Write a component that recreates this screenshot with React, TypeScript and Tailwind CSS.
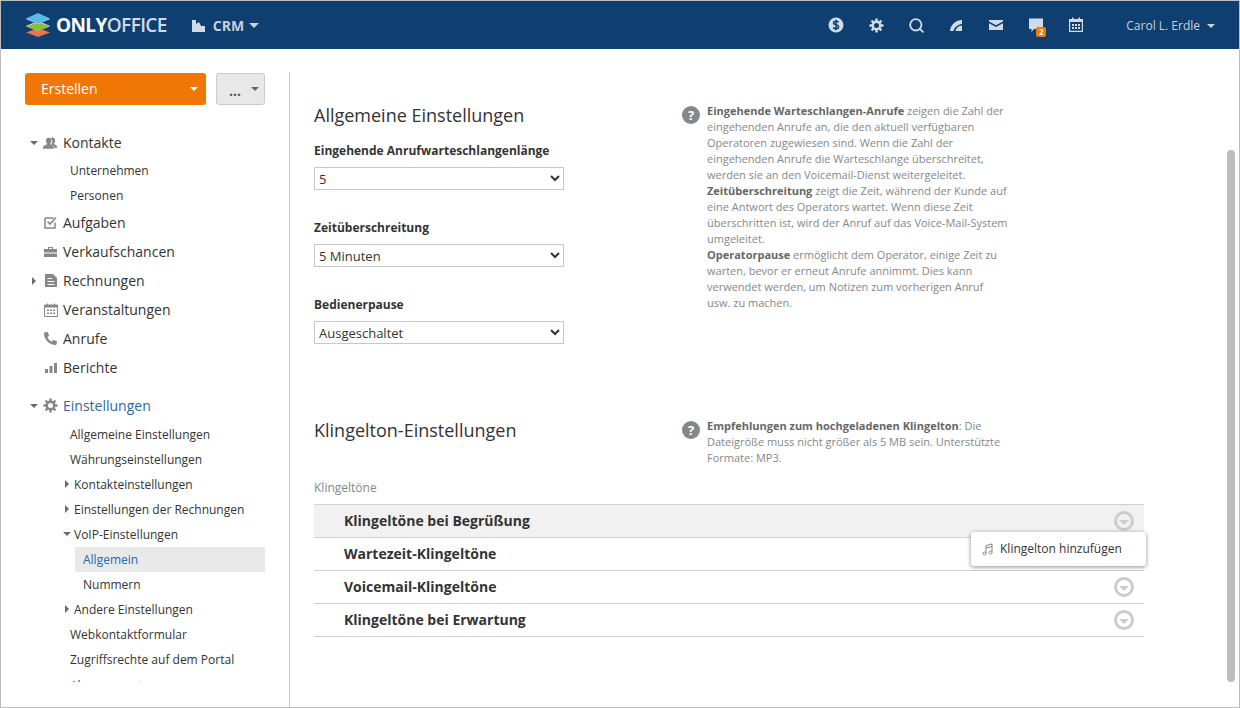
import { FaPhoneAlt } from "react-icons/fa";
import { Search } from "lucide-react";

const font = { fontFamily: '"Open Sans", sans-serif' };

const Caret = ({ className }: { className: string }) => <span className={`inline-block h-0 w-0 border-x-[4px] border-t-[4px] border-x-transparent ${className}`} />;
const CaretRight = () => <span className="inline-block h-0 w-0 border-y-[4px] border-l-[4px] border-y-transparent border-l-[#6a6a6a]" />;

const Logo = () => (
  <svg width="26" height="24" viewBox="0 0 26 24">
    <path d="M13 15l12 4.500L13 24 1 19.500z" fill="#e8734f" />
    <path d="M13 8l12 5-12 5-12-5z" fill="#fff" />
    <path d="M13 8.800l12 4.600-12 4.800-12-4.800z" fill="#8fbc3c" />
    <path d="M13 1l12 5-12 5L1 6z" fill="#fff" />
    <path d="M13 0l12 5.500-12 5.500L1 5.500z" fill="#5cb8e6" />
  </svg>
);

const Gear = ({ size, className }: { size: number; className?: string }) => (
  <svg className={className} width={size} height={size} viewBox="0 0 16 16" fill="none" stroke="currentColor">
    <circle cx="8" cy="8" r="4" strokeWidth="2.600" />
    <path d="M8 .5v3M8 12.500v3M.5 8h3M12.500 8h3M2.700 2.700l2.100 2.100M11.200 11.200l2.100 2.100M2.700 13.300l2.100-2.100M11.200 4.800l2.100-2.100" strokeWidth="2.600" />
  </svg>
);

const TopIcons = () => (
  <div className="flex items-center gap-[22px] text-[#d0dbe7]">
    <svg width="18" height="18" viewBox="0 0 18 18">
      <circle cx="9" cy="9" r="7.500" fill="currentColor" />
      <path d="M11.600 6.300C11 5.500 10 5.200 9 5.200c-1.400 0-2.500.7-2.500 1.800 0 2.300 5.100 1.300 5.100 3.800 0 1.200-1.200 1.900-2.600 1.900-1.100 0-2.200-.4-2.800-1.200M9 3.800v10.400" fill="none" stroke="#0f3e70" strokeWidth="1.500" />
    </svg>
    <span className="flex w-[18px] justify-center"><Gear size={15} /></span>
    <span className="flex w-[18px] justify-center"><Search size={17} strokeWidth={2.6} /></span>
    <svg width="18" height="18" viewBox="0 0 18 18">
      <path d="M3 15C3.500 9 8 4.500 15 4v4C11 8.500 7.500 11 6.500 15zM8.500 15C9 12.500 11.500 9.500 15 9.500V15z" fill="currentColor" />
    </svg>
    <svg width="18" height="18" viewBox="0 0 18 18">
      <path d="M2 4h14v1.500L9 9.300 2 5.500zM2 7.200l7 3.800 7-3.800V14H2z" fill="currentColor" />
    </svg>
    <div className="relative h-[18px] w-[18px]">
      <svg width="18" height="18" viewBox="0 0 18 18">
        <path d="M2 2.500h14v10.500H7l-2.500 3v-3H2z" fill="currentColor" />
      </svg>
      <span className="absolute left-[9px] top-[11px] flex h-[10px] w-[10px] items-center justify-center rounded-[2px] bg-[#f07606] text-[8px] font-bold leading-none text-white">2</span>
    </div>
    <svg width="18" height="18" viewBox="0 0 18 18">
      <path d="M2.600 3.500h12.800v11.900H2.600z" fill="none" stroke="currentColor" strokeWidth="1.200" />
      <path d="M2 3h14v3H2zM5 1.500h1.500V4H5zM11.500 1.500H13V4h-1.500z" fill="currentColor" />
      <path d="M5 8h2v2H5zM8 8h2v2H8zM11 8h2v2h-2zM5 11h2v2H5zM8 11h2v2H8zM11 11h2v2h-2z" fill="currentColor" />
    </svg>
  </div>
);

const Header = () => (
  <header className="flex h-[48px] shrink-0 items-center bg-[#0f3e70] pl-[24px] pr-[24px]">
    <Logo />
    <span className="ml-[5px] text-[19px] font-bold leading-none tracking-[-0.6px] text-white">
      ONLY<span className="font-semibold text-[#cfdbe7]">OFFICE</span>
    </span>
    <svg className="ml-[25px]" width="13" height="14" viewBox="0 0 13 14">
      <path d="M0 2h4v4l3-2 2 4h4v6H0z" fill="#d0dbe7" />
    </svg>
    <span className="ml-[8px] text-[14px] font-bold text-[#c5d1de]">CRM</span>
    <Caret className="ml-[5px] border-x-[5px] border-t-[5px] border-t-[#c5d1de]" />
    <div className="ml-auto flex items-center">
      <TopIcons />
      <span className="ml-[41px] mt-[1px] text-[12px] text-[#c5d1de]">Carol L. Erdle</span>
      <Caret className="ml-[7px] mt-[2px] border-t-[#c5d1de]" />
    </div>
  </header>
);

const iconClass = "text-[#83888d]";
const NavIcons: Record<string, React.ReactNode> = {
  Kontakte: (
    <svg className={iconClass} width="16" height="14" viewBox="0 0 16 14">
      <path d="M10 1c2 0 3 1.500 3 3.500 0 1.500-.8 2.700-1.500 3.300 0 .7 3.500 1.200 3.500 3.200v1h-3c0-1.700-2-2.500-3.500-3.300.8-1 1.500-2.300 1.500-4C9 3 8.500 2 8 1.500 8.500 1.200 9.300 1 10 1z" fill="currentColor" />
      <path d="M6 1.500c1.900 0 3 1.400 3 3.200 0 1.500-.8 2.700-1.500 3.300 0 .8 4 1.400 4 3.500V13H0v-1.500C0 9.400 4.500 8.800 4.500 8 3.800 7.400 3 6.200 3 4.700c0-1.800 1.100-3.200 3-3.200z" fill="currentColor" />
    </svg>
  ),
  Aufgaben: (
    <svg className={iconClass} width="13" height="13" viewBox="0 0 13 13">
      <path d="M1 2h8.500M1 2v10h10V6.500" fill="none" stroke="currentColor" strokeWidth="1.500" />
      <path d="M3.500 5.500l2.500 2.500 6-6.500" fill="none" stroke="currentColor" strokeWidth="1.700" />
    </svg>
  ),
  Verkaufschancen: (
    <svg className={iconClass} width="13" height="12" viewBox="0 0 13 12">
      <path d="M4 3V1h5v2h4v3.500H0V3zM5 3h3V2H5zM0 7.500h13V11H0z" fill="currentColor" fillRule="evenodd" />
    </svg>
  ),
  Rechnungen: (
    <svg className={iconClass} width="12" height="13" viewBox="0 0 12 13">
      <path d="M0 0h8l4 4v9H0zM2.500 4v1H7V4zm0 3v1H9.500V7zm0 3v1H9.500v-1z" fill="currentColor" fillRule="evenodd" />
    </svg>
  ),
  Veranstaltungen: (
    <svg className={iconClass} width="14" height="14" viewBox="0 0 14 14">
      <path d="M.5 2h13v11.500H.5z" fill="none" stroke="currentColor" />
      <path d="M0 2h14v2.500H0zM3 .5h1V3H3zM10 .5h1V3h-1zM3 6.500h2v1.500H3zM6 6.500h2v1.500H6zM9 6.500h2v1.500H9zM3 9.500h2V11H3zM6 9.500h2V11H6zM9 9.500h2V11H9z" fill="currentColor" />
    </svg>
  ),
  Anrufe: <FaPhoneAlt className={iconClass} size={13} />,
  Berichte: (
    <svg className={iconClass} width="12" height="10" viewBox="0 0 12 10">
      <path d="M0 6h3v4H0zM4.500 3h3v7h-3zM9 0h3v10H9z" fill="currentColor" />
    </svg>
  ),
  Einstellungen: <Gear className={iconClass} size={15} />,
};

const NavItem = ({ label, expand, active, gapTop }: { label: string; expand?: "open" | "closed"; active?: boolean; gapTop?: boolean }) => (
  <div className={`flex h-[29px] items-center text-[14px] ${active ? "text-[#2a68a8]" : "text-[#333]"} ${gapTop ? "mt-[9px]" : ""}`}>
    <span className={`flex w-[18px] shrink-0 items-center ${expand === "closed" ? "pl-[7px]" : "pl-[5px]"}`}>
      {expand === "open" && <Caret className="border-t-[#6a6a6a]" />}
      {expand === "closed" && <CaretRight />}
    </span>
    <span className="mr-[5px] flex w-[15px] shrink-0 items-center justify-center">{NavIcons[label]}</span>
    <span>{label}</span>
  </div>
);

const SubItem = ({ label, expand }: { label: string; expand?: "open" | "closed" }) => (
  <div className="relative flex h-[25px] items-center pl-[45px] text-[12px] text-[#333]">
    {expand === "open" && <Caret className="absolute left-[38px] top-[10px] border-t-[#6a6a6a]" />}
    {expand === "closed" && <span className="absolute left-[40px] top-[8px] flex"><CaretRight /></span>}
    <span className={expand ? "ml-[4px]" : ""}>{label}</span>
  </div>
);

const Sidebar = () => (
  <aside className="mt-[23px] flex h-[635px] w-[289px] shrink-0 flex-col border-r border-[#c9c9c9] pl-[24px] pr-[24px] pt-[1px]">
    <div className="flex h-[32px] shrink-0 gap-[10px]">
      <button className="flex w-[181px] items-center justify-between rounded-[3px] bg-[#f07606] pb-[2px] pl-[16px] pr-[8px] text-[14px] text-white">
        Erstellen
        <Caret className="mt-[2px] border-t-white" />
      </button>
      <button className="flex w-[49px] items-center justify-between rounded-[3px] border border-[#cbcbcb] bg-[#e8e8e8] pl-[12px] pr-[5px] text-[#555]">
        <span className="mt-[3px] text-[14px] font-bold leading-none">...</span>
        <Caret className="border-t-[#666]" />
      </button>
    </div>
    <nav className="mt-[23px] h-[554px] overflow-hidden">
      <NavItem label="Kontakte" expand="open" />
      <div className="mt-[1px]">
        <SubItem label="Unternehmen" />
        <SubItem label="Personen" />
      </div>
      <NavItem label="Aufgaben" />
      <NavItem label="Verkaufschancen" />
      <NavItem label="Rechnungen" expand="closed" />
      <NavItem label="Veranstaltungen" />
      <NavItem label="Anrufe" />
      <NavItem label="Berichte" />
      <NavItem label="Einstellungen" expand="open" active gapTop />
      <div className="mt-[2px]">
        <SubItem label="Allgemeine Einstellungen" />
        <SubItem label="Währungseinstellungen" />
        <SubItem label="Kontakteinstellungen" expand="closed" />
        <SubItem label="Einstellungen der Rechnungen" expand="closed" />
        <SubItem label="VoIP-Einstellungen" expand="open" />
        <div className="ml-[50px] flex h-[25px] items-center bg-[#e9e9e9] pl-[8px] text-[12px] text-[#2a68a8]">Allgemein</div>
        <div className="ml-[50px] flex h-[25px] items-center pl-[8px] text-[12px] text-[#333]">Nummern</div>
        <SubItem label="Andere Einstellungen" expand="closed" />
        <SubItem label="Webkontaktformular" />
        <SubItem label="Zugriffsrechte auf dem Portal" />
        <div className="pt-[1px]"><SubItem label="Abonnements" /></div>
      </div>
    </nav>
  </aside>
);

const Field = ({ label, value }: { label: string; value: string }) => (
  <div className="mb-[29px]">
    <div className="mb-[7px] text-[12px] font-bold leading-[18px] text-[#333]">{label}</div>
    <select defaultValue={value} className="block h-[23px] w-[250px] border border-[#c7c7c7] bg-white text-[13px] text-[#333]">
      <option>{value}</option>
    </select>
  </div>
);

const Help = () => (
  <span className="mt-[3px] flex h-[18px] w-[18px] shrink-0 items-center justify-center rounded-full bg-[#83888d] text-[13px] font-bold leading-none text-white">?</span>
);

const RingtoneRow = ({ label, highlighted }: { label: string; highlighted?: boolean }) => (
  <div className={`flex h-[33px] items-center justify-between border-t border-[#d1d1d1] pl-[30px] pr-[10px] ${highlighted ? "bg-[#f1f1f1]" : ""}`}>
    <span className="mb-[2px] text-[14px] font-bold text-[#333]">{label}</span>
    <span className="flex h-[20px] w-[20px] items-center justify-center rounded-full border-[3px] border-[#cccccc]">
      <span className="mt-[2px] h-0 w-0 border-x-[5px] border-t-[5px] border-x-transparent border-t-[#cccccc]" />
    </span>
  </div>
);

const Main = () => (
  <main className="relative flex-1 pl-[24px]">
    <section className="flex pt-[52px]">
      <div className="w-[368px] shrink-0">
        <h2 className="mb-[13px] text-[18px] leading-[28px] text-[#333]">Allgemeine Einstellungen</h2>
        <Field label="Eingehende Anrufwarteschlangenlänge" value="5" />
        <Field label="Zeitüberschreitung" value="5 Minuten" />
        <Field label="Bedienerpause" value="Ausgeschaltet" />
      </div>
      <div className="flex w-[330px] gap-[7px] pt-[2px]">
        <Help />
        <p className="w-[301px] text-[11px] leading-[16px] text-[#83888d]">
          <b className="text-[#666]">Eingehende Warteschlangen-Anrufe</b> zeigen die Zahl der eingehenden Anrufe an, die den aktuell verfügbaren Operatoren zugewiesen sind. Wenn die Zahl der eingehenden Anrufe die Warteschlange überschreitet, werden sie an den Voicemail-Dienst weitergeleitet.
          <br />
          <b className="text-[#666]">Zeitüberschreitung</b> zeigt die Zeit, während der Kunde auf eine Antwort des Operators wartet. Wenn diese Zeit überschritten ist, wird der Anruf auf das Voice-Mail-System umgeleitet.
          <br />
          <b className="text-[#666]">Operatorpause</b> ermöglicht dem Operator, einige Zeit zu warten, bevor er erneut Anrufe annimmt. Dies kann verwendet werden, um Notizen zum vorherigen Anruf usw. zu machen.
        </p>
      </div>
    </section>
    <section className="mt-[34px] flex">
      <h2 className="w-[368px] shrink-0 pt-[9px] text-[18px] leading-[28px] text-[#333]">Klingelton-Einstellungen</h2>
      <div className="flex w-[330px] gap-[7px] pt-[11px]">
        <Help />
        <p className="w-[301px] text-[11px] leading-[16px] text-[#83888d]">
          <b className="text-[#666]">Empfehlungen zum hochgeladenen Klingelton</b>: Die Dateigröße muss nicht größer als 5 MB sein. Unterstützte Formate: MP3.
        </p>
      </div>
    </section>
    <div className="mt-[13px] text-[12px] leading-[18px] text-[#83888d]">Klingeltöne</div>
    <div className="mt-[7px] w-[830px] border-b border-[#d1d1d1]">
      <RingtoneRow label="Klingeltöne bei Begrüßung" highlighted />
      <RingtoneRow label="Wartezeit-Klingeltöne" />
      <RingtoneRow label="Voicemail-Klingeltöne" />
      <RingtoneRow label="Klingeltöne bei Erwartung" />
    </div>
    <div className="absolute left-[681px] top-[483px] flex h-[34px] w-[175px] items-center gap-[7px] rounded-[3px] bg-white pl-[11px] text-[12px] text-[#333] shadow-[0_1px_4px_rgba(0,0,0,0.45)]">
      <svg className="text-[#83888d]" width="11" height="13" viewBox="0 0 11 13" fill="none" stroke="currentColor">
        <circle cx="2.500" cy="10.500" r="1.500" />
        <circle cx="8.500" cy="9.500" r="1.500" />
        <path d="M4 10.500V2.500l6-1.500v8.500M4 5l6-1.500" />
      </svg>
      Klingelton hinzufügen
    </div>
    <div className="absolute left-[937px] top-[101px] h-[532px] w-[8px] rounded-[4px] bg-[#bcbcbc]" />
  </main>
);

export default function App() {
  return (
    <div style={font} className="flex h-[708px] w-[1240px] flex-col overflow-hidden border border-[#bdbdbd] bg-white">
      <Header />
      <div className="flex min-h-0 flex-1">
        <Sidebar />
        <Main />
      </div>
    </div>
  );
}
